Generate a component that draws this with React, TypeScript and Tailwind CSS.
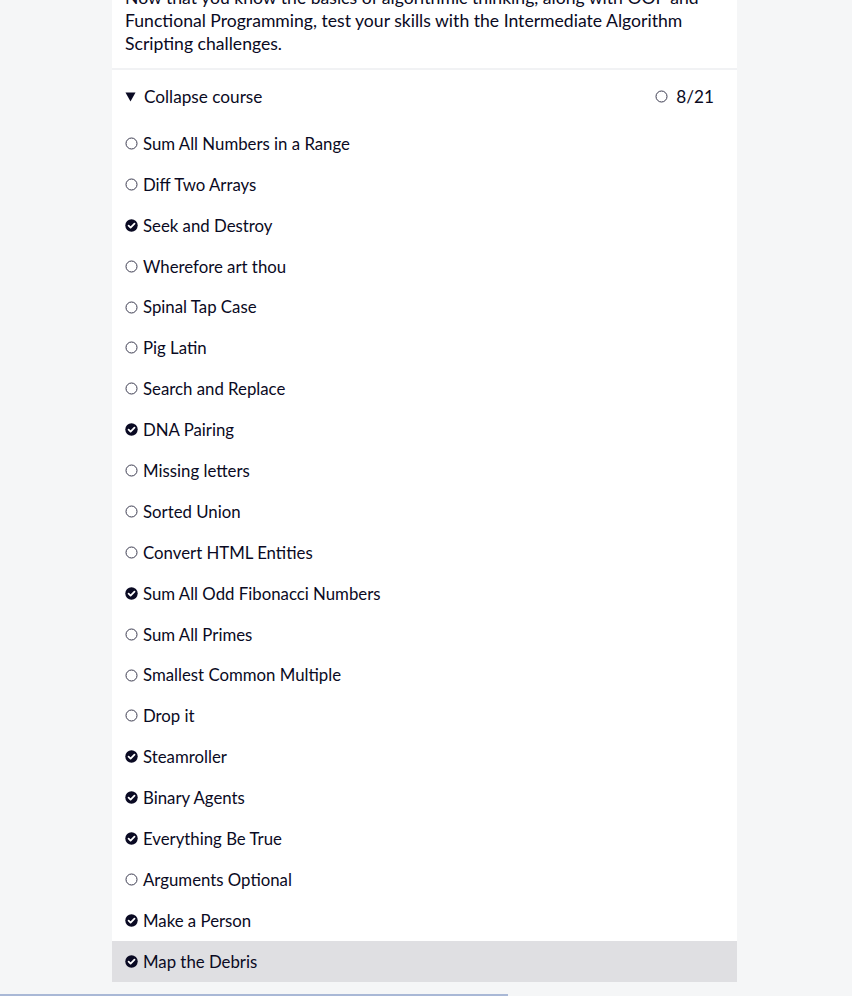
import React from "react";

const items: [string, boolean][] = [
  ["Sum All Numbers in a Range", false],
  ["Diff Two Arrays", false],
  ["Seek and Destroy", true],
  ["Wherefore art thou", false],
  ["Spinal Tap Case", false],
  ["Pig Latin", false],
  ["Search and Replace", false],
  ["DNA Pairing", true],
  ["Missing letters", false],
  ["Sorted Union", false],
  ["Convert HTML Entities", false],
  ["Sum All Odd Fibonacci Numbers", true],
  ["Sum All Primes", false],
  ["Smallest Common Multiple", false],
  ["Drop it", false],
  ["Steamroller", true],
  ["Binary Agents", true],
  ["Everything Be True", true],
  ["Arguments Optional", false],
  ["Make a Person", true],
  ["Map the Debris", true],
];

function Circle() {
  return (
    <svg width="13" height="13" viewBox="0 0 13 13" className="shrink-0">
      <circle cx="6.5" cy="6.5" r="5.5" fill="none" stroke="#3b3b4f" strokeWidth="1" />
    </svg>
  );
}

function Check() {
  return (
    <svg width="13" height="13" viewBox="0 0 13 13" className="shrink-0">
      <circle cx="6.5" cy="6.5" r="6.2" fill="#0a0a23" />
      <path d="M3.6 6.7 L5.6 8.6 L9.5 4.6" fill="none" stroke="#ffffff" strokeWidth="1.8" strokeLinecap="round" strokeLinejoin="round" />
    </svg>
  );
}

export default function App() {
  return (
    <div className="relative h-[996px] w-full overflow-hidden bg-[#f5f6f7] text-[#0a0a23]" style={{ fontFamily: "Lato, 'Open Sans', sans-serif" }}>
      <div className="ml-[112px] mt-[-14px] w-[625px] bg-white">
        <p className="px-[13px] pb-[13px] text-[17.6px] leading-[23px]">
          Now that you know the basics of algorithmic thinking, along with OOP and Functional Programming, test your skills with the Intermediate Algorithm Scripting challenges.
        </p>
        <div className="h-[2px] bg-[#f1f2f4]" />
        <div className="flex h-[53px] items-center justify-between pl-[13px] pr-[23px] pt-[1px] text-[17.2px]">
          <div className="flex items-center gap-[8px]">
            <svg width="11" height="10" viewBox="0 0 11 10" className="shrink-0">
              <path d="M0.5 0.5 L10.5 0.5 L5.5 9.5 Z" fill="#0a0a23" />
            </svg>
            <span>Collapse course</span>
          </div>
          <div className="flex items-center gap-[8px]">
            <Circle />
            <span>8/21</span>
          </div>
        </div>
        <ul>
          {items.map(([name, done], i) => (
            <li
              key={name}
              className={`flex h-[40.9px] items-center gap-[5px] pl-[13px] text-[16.8px] ${i === items.length - 1 ? "bg-[#dfdfe2]" : ""}`}
            >
              {done ? <Check /> : <Circle />}
              <span>{name}</span>
            </li>
          ))}
        </ul>
      </div>
      <div className="absolute bottom-0 left-0 h-[2px] w-[508px] bg-[#a9b8d6]" />
    </div>
  );
}
